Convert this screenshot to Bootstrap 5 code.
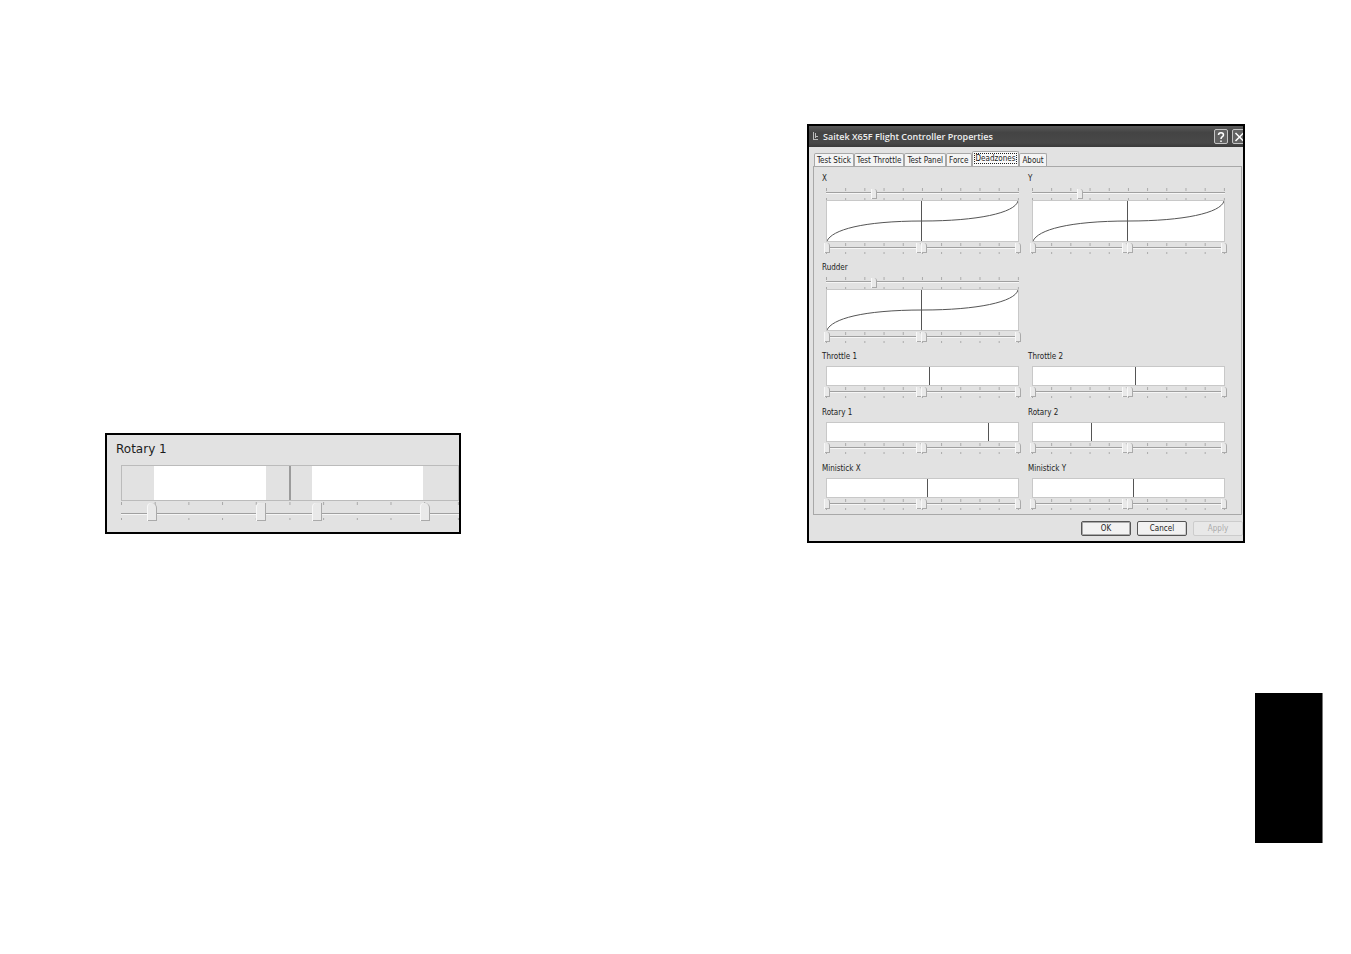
<!DOCTYPE html>
<html lang="en">
<head>
<meta charset="utf-8">
<meta name="viewport" content="width=device-width, initial-scale=1">
<title>Saitek X65F Flight Controller Properties</title>
<link href="https://cdn.jsdelivr.net/npm/bootstrap@5.3.0/dist/css/bootstrap.min.css" rel="stylesheet">
<style>
  :root { --face: #e2e2e2; --edge: #a8a8a8; --ink: #1c1c1c; }
  body { background: #fff; color: var(--ink); font-family: "DejaVu Sans Condensed", "DejaVu Sans", sans-serif; }
  .spread { padding: 124px 106px 0 105px; }
  .figure-frame { border: 2px solid #000; background: var(--face); overflow: hidden; }
  .detail { flex: 0 1 356px; margin-top: 309px; padding: 5px 0 11px 9px; }
  .dialog { flex: 0 1 438px; font-size: 8px; line-height: 10px; }
  .thumb-index { width: 68px; height: 150px; margin: 150px 28px 0 auto; background: #000; border-right: 1px solid #777; }

  /* title bar */
  .title-bar { height: 21px; padding-left: 2px; background: linear-gradient(#5a5a5a, #444 30%, #484848 80%, #3a3a3a); color: #eee; }
  .title-bar h1 { font: 600 9px/21px "Open Sans", sans-serif; margin: 0 0 0 3px; }
  .caption-btn { width: 14px; height: 15px; padding: 0; border: 1px solid #c4c4c4; border-radius: 2px; background: #626262; line-height: 0; }
  .caption-btn.close-btn { margin-right: -3px; }

  /* tabs */
  .sheet-tabs { padding: 4px 0 0 5px; }
  .sheet-tabs .nav-link { height: 13px; padding: 2px 2px 0; border: 1px solid var(--edge); border-bottom: 0; border-radius: 2px 2px 0 0; background: #f4f4f4; color: var(--ink); line-height: 10px; white-space: nowrap; }
  .sheet-tabs .nav-link.active { height: 15px; padding: 1px 1px 0; background: #fafafa; }
  .sheet-tabs .active span { display: block; border: 1px dotted #222; padding: 0 1px; line-height: 9px; }
  .sheet { margin: 0 1px 0 4px; padding: 7px 7px 4px 8px; border: 1px solid var(--edge); }
  .axes { display: grid; grid-template-columns: 1fr 1fr; }

  /* one axis: name, optional curve slider, plot, deadzone sliders */
  .axis-box { padding: 0 9px 10px 4px; }
  .axis-box.curved { padding-bottom: 9px; }
  .axis-box:nth-last-child(-n+2) { padding-bottom: 0; }
  .axis-box label, .detail label { display: block; }
  .axis-box label { margin: 0 0 4px -4px; }
  .plot { display: block; width: 100%; height: 20px; background: #fff; border: 1px solid #c8c8c8; }
  .curved .plot { height: 42px; }
  .plot path, .plot line { fill: none; stroke: #555; vector-effect: non-scaling-stroke; }
  .scale {
    --tick: linear-gradient(90deg, #a8a8a8 1px, transparent 1px);
    display: grid; height: 12px;
    background:
      var(--tick) 0 1px / calc((100% - 1px) / 10) 3px repeat-x,
      var(--tick) 0 100% / calc((100% - 1px) / 10) 2px repeat-x,
      linear-gradient(#a0a0a0, #a0a0a0) 0 5px / 100% 1px no-repeat,
      linear-gradient(#f6f6f6, #f6f6f6) 0 6px / 100% 1px no-repeat;
  }
  .scale.bend { background-position: 0 0, 0 100%, 0 4px, 0 5px; }
  .scale input { grid-area: 1 / 1; appearance: none; -webkit-appearance: none; background: none; width: calc(100% + 3px); height: 100%; margin: 0 -2px 0 -1px; pointer-events: none; }
  .scale input::-webkit-slider-thumb { -webkit-appearance: none; pointer-events: auto; width: 5px; height: 10px; background: #e9e9e9; border: 1px solid #aaa; border-width: 0 1px 1px 0; box-shadow: -1px 0 #f8f8f8; border-radius: 0 3px 0 0; }
  .scale input::-moz-range-thumb { pointer-events: auto; width: 5px; height: 10px; background: #e9e9e9; border: 1px solid #aaa; border-radius: 0; }

  /* enlarged Rotary 1 */
  .detail label { font-family: "DejaVu Sans", sans-serif; font-size: 12px; line-height: 18px; }
  .detail .axis-body { margin: 7px 0 0 5px; }
  .detail .plot { height: 36px; background: var(--face); border-color: #bbb; }
  .detail .plot rect { fill: #fff; }
  .detail .scale { height: 20px; background-position: 0 1px, 0 17px, 0 12px, 0 13px; }
  .detail .scale input { width: calc(100% + 10px); margin: 1px -5px 0; }
  .detail .scale input::-webkit-slider-thumb { width: 9px; height: 18px; border-radius: 4px 5px 0 0; }
  .detail .scale input.inner::-webkit-slider-thumb { border-radius: 4px 0 0 0; }

  /* dialog buttons */
  .push { width: 50px; height: 15px; padding: 0; border: 1px solid #555; border-radius: 2px; background: #f2f2f2; color: var(--ink); font-size: 8px; line-height: 12px; box-shadow: inset -1px -1px #ccc; }
  .push.default { box-shadow: inset 0 0 0 1px #aaa; }
  .push:disabled { border-color: #ccc; color: #aaa; box-shadow: none; background: #e8e8e8; }
  .actions { padding: 6px 0 5px; gap: 6px; }
</style>
</head>
<body>
<main>
  <div class="spread d-flex justify-content-between align-items-start">
    <section class="figure-frame detail">
      <label for="detail-0">Rotary 1</label>
      <div class="axis-body">
        <svg class="plot" viewBox="0 0 336 34" preserveAspectRatio="none" aria-hidden="true">
          <rect x="32" width="112" height="34"/><rect x="190" width="111" height="34"/>
          <line x1="168" x2="168" y1="0" y2="34"/>
        </svg>
        <div class="scale">
          <input type="range" id="detail-0" max="1000" value="94">
          <input type="range" class="inner" max="1000" value="416" aria-label="Rotary 1 centre low">
          <input type="range" class="inner" max="1000" value="582" aria-label="Rotary 1 centre high">
          <input type="range" max="1000" value="900" aria-label="Rotary 1 high end">
        </div>
      </div>
    </section>

    <section class="figure-frame dialog">
      <header class="title-bar d-flex align-items-center">
        <svg width="9" height="11" viewBox="0 0 9 11" fill="none" stroke="#bbb" aria-hidden="true"><path d="M2.500 1v7M4.500 2v5M2 8.500h5M5 5.500h2"/></svg>
        <h1 class="me-auto">Saitek X65F Flight Controller Properties</h1>
        <button class="caption-btn me-1" aria-label="Help"><svg width="10" height="12" viewBox="0 0 10 12" fill="none" stroke="#fff" stroke-width="1.500"><path d="M2.500 4c0-3 5-3 5 0 0 2-2.500 1.500-2.500 4M5 9.500v1.500"/></svg></button>
        <button class="caption-btn close-btn" aria-label="Close"><svg width="11" height="12" viewBox="0 0 11 12" fill="none" stroke="#fff" stroke-width="1.500"><path d="M1.500 2l8 8M9.500 2l-8 8"/></svg></button>
      </header>
      <nav class="sheet-tabs nav flex-nowrap align-items-end">
        <a class="nav-link" href="#stick">Test Stick</a>
        <a class="nav-link" href="#throttle">Test Throttle</a>
        <a class="nav-link" href="#panel">Test Panel</a>
        <a class="nav-link" href="#force">Force</a>
        <a class="nav-link active" href="#deadzones" aria-current="page"><span>Deadzones</span></a>
        <a class="nav-link" href="#about">About</a>
      </nav>
      <div class="sheet"><div class="axes" id="deadzones"></div></div>
      <footer class="actions d-flex justify-content-end">
        <button class="push default">OK</button>
        <button class="push">Cancel</button>
        <button class="push" disabled>Apply</button>
      </footer>
    </section>
  </div>
  <div class="thumb-index"></div>
</main>

<script src="https://cdn.jsdelivr.net/npm/bootstrap@5.3.0/dist/js/bootstrap.bundle.min.js"></script>
<script>
  // name, current position (%), response curve present; null leaves a cell empty
  const axes = [
    ['X', 50, true], ['Y', 50, true],
    ['Rudder', 50, true], null,
    ['Throttle 1', 54, false], ['Throttle 2', 54, false],
    ['Rotary 1', 85, false], ['Rotary 2', 31, false],
    ['Ministick X', 53, false], ['Ministick Y', 53, false]
  ];
  const slider = (name, value, id) =>
    `<input type="range" max="1000" value="${value}" ${id ? `id="${id}"` : `aria-label="${name}"`}>`;
  document.getElementById('deadzones').innerHTML = axes.map((axis, i) => {
    if (!axis) return '<div></div>';
    const [name, position, curved] = axis;
    const height = curved ? 40 : 18;
    const x = Math.floor(position * 1.91) - 0.5;
    return `<div class="axis-box ${curved ? 'curved' : ''}">
      <label for="axis-${i}">${name}</label>
      ${curved ? `<div class="scale bend">${slider(name + ' curve', 245)}</div>` : ''}
      <svg class="plot" viewBox="0 0 191 ${height}" preserveAspectRatio="none" aria-hidden="true">
        ${curved ? '<path d="M0 40C5 29 35 20 96 20C150 20 188 12 191 0"/>' : ''}
        <line x1="${x}" x2="${x}" y1="0" y2="${height}"/>
      </svg>
      <div class="scale">${slider('', 0, 'axis-' + i)}${slider(name + ' centre low', 482)}${slider(name + ' centre high', 510)}${slider(name + ' high end', 1000)}</div>
    </div>`;
  }).join('');
</script>
</body>
</html>
